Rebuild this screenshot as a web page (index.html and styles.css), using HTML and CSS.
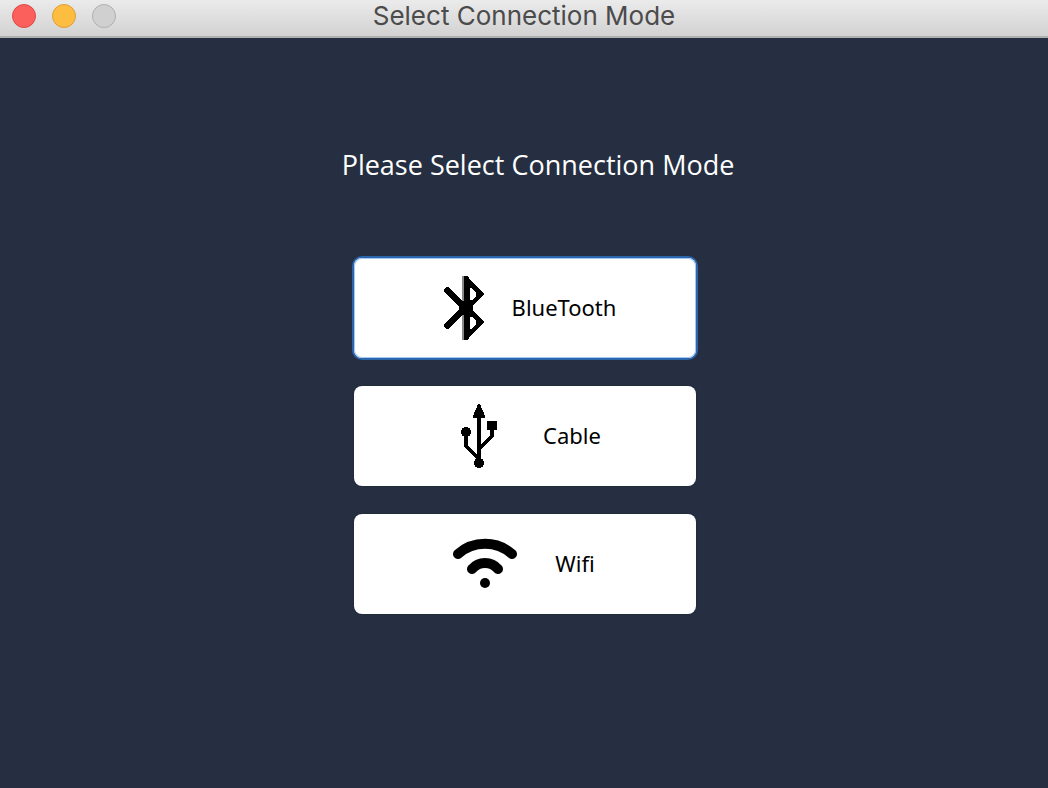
FILE: index.html
```html
<!DOCTYPE html>
<html lang="en">
<head>
<meta charset="utf-8">
<meta name="viewport" content="width=device-width, initial-scale=1">
<title>Select Connection Mode</title>
<link rel="stylesheet" href="styles.css">
</head>
<body>
<header class="titlebar">
  <div class="window-controls">
    <button class="control control-close" type="button" aria-label="Close"></button>
    <button class="control control-minimize" type="button" aria-label="Minimize"></button>
    <button class="control control-zoom" type="button" aria-label="Zoom" disabled></button>
  </div>
  <div class="window-title">Select Connection Mode</div>
</header>
<main class="content">
  <h1 class="heading">Please Select Connection Mode</h1>
  <div class="modes">
    <button class="mode mode-selected" type="button">
      <svg class="icon icon-pixel" viewBox="0 0 64 64" aria-hidden="true">
        <path class="soft" d="M30 0H32V26H30ZM30 38H32V64H30Z"/>
        <path fill-rule="evenodd" d="M32 0H36L38 4L52 18L41 29V35L52 46L38 60L36 64H32V39H30L18 51L16 53H14L12 51V48L27 33V31L12 16V13L14 11H16L18 13L30 25H32ZM38 12V24H40L44 20V17L39 12ZM38 41V53H39L44 48V45L40 41Z"/>
      </svg>
      <span class="label">BlueTooth</span>
    </button>
    <button class="mode mode-cable" type="button">
      <svg class="icon icon-pixel" viewBox="0 0 64 64" aria-hidden="true">
        <path d="M31 0H33L38 12V14H26V12Z"/>
        <path d="M40 17H50V26H40Z"/>
        <circle cx="19" cy="28" r="5"/>
        <circle cx="32" cy="59" r="5"/>
        <path class="stroke-thin" d="M32 12V58M45 24V32L32 45M19 28V42L32 55"/>
      </svg>
      <span class="label">Cable</span>
    </button>
    <button class="mode mode-wifi" type="button">
      <svg class="icon" viewBox="0 0 64 64" aria-hidden="true">
        <path class="stroke-thick" d="M5 22A41 41 0 0 1 59 22M19 37A17 17 0 0 1 45 37"/>
        <circle cx="32" cy="51" r="5"/>
      </svg>
      <span class="label">Wifi</span>
    </button>
  </div>
</main>
</body>
</html>
```
FILE: styles.css
```css
* {
  box-sizing: border-box;
}

body {
  margin: 0;
  min-height: 100vh;
  display: flex;
  flex-direction: column;
  background: #252f41;
  font-family: "Noto Sans", "Open Sans", sans-serif;
}

.titlebar {
  display: grid;
  grid-template-columns: 1fr auto 1fr;
  align-items: center;
  padding: 0 12px 4px;
  height: 38px;
  background: linear-gradient(#ebebeb, #d2d2d2);
  border-bottom: 2px solid #b0b0b0;
}

.window-controls {
  display: flex;
  gap: 16px;
}

.control {
  width: 24px;
  height: 24px;
  padding: 0;
  border: 1px solid;
  border-radius: 50%;
}

.control-close {
  background: #fc605c;
  border-color: #df4744;
}

.control-minimize {
  background: #fdbd41;
  border-color: #de9f34;
}

.control-zoom {
  background: #d0d0d0;
  border-color: #b0b0b0;
}

.window-title {
  color: #4b4b4b;
  font-family: Inter, Roboto, sans-serif;
  font-size: 26px;
  line-height: 32px;
}

.content {
  flex: 1;
  display: flex;
  flex-direction: column;
  align-items: center;
  gap: 74px;
  padding-top: 108px;
}

.heading {
  margin: 0;
  padding-left: 28px;
  color: #fff;
  font-family: "Open Sans", "Noto Sans", sans-serif;
  font-size: 27px;
  font-weight: 400;
  line-height: 38px;
}

.modes {
  display: flex;
  flex-direction: column;
  gap: 28px;
  width: 342px;
  max-width: 100%;
  margin-left: 2px;
}

.mode {
  display: flex;
  align-items: center;
  justify-content: center;
  gap: 14px;
  height: 100px;
  padding: 0 2px 0 0;
  border: 0;
  border-radius: 8px;
  background: #fff;
  color: #000;
  font: inherit;
  font-size: 22px;
  line-height: 32px;
  box-shadow: 0 0 2px #1c2534;
}

.mode-selected {
  gap: 16px;
  box-shadow: inset 0 0 0 1px #a5c9ee, 0 0 0 2px #2b65ab;
}

.mode-cable {
  gap: 32px;
}

.mode-wifi {
  gap: 38px;
}

.label {
  padding-bottom: 2px;
}

.icon {
  width: 64px;
  height: 64px;
  fill: #000;
}

.icon-pixel {
  shape-rendering: crispEdges;
}

.soft {
  fill: #888;
}

.stroke-thin {
  fill: none;
  stroke: #000;
  stroke-width: 4;
}

.stroke-thick {
  fill: none;
  stroke: #000;
  stroke-width: 10;
  stroke-linecap: round;
}
```
